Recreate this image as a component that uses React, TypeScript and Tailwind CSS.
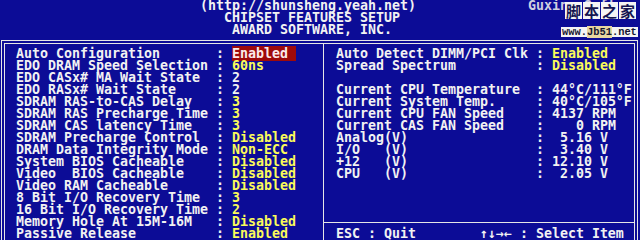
import React from 'react';

type Item = { label: string; value: string; tone: 'sel' | 'yellow' | 'white' };

const chipset: Item[] = [
  { label: 'Auto Configuration', value: 'Enabled', tone: 'sel' },
  { label: 'EDO DRAM Speed Selection', value: '60ns', tone: 'yellow' },
  { label: 'EDO CASx# MA Wait State', value: '2', tone: 'white' },
  { label: 'EDO RASx# Wait State', value: '2', tone: 'white' },
  { label: 'SDRAM RAS-to-CAS Delay', value: '3', tone: 'yellow' },
  { label: 'SDRAM RAS Precharge Time', value: '3', tone: 'yellow' },
  { label: 'SDRAM CAS latency Time', value: '3', tone: 'yellow' },
  { label: 'SDRAM Precharge Control', value: 'Disabled', tone: 'yellow' },
  { label: 'DRAM Data Integrity Mode', value: 'Non-ECC', tone: 'yellow' },
  { label: 'System BIOS Cacheable', value: 'Disabled', tone: 'yellow' },
  { label: 'Video  BIOS Cacheable', value: 'Disabled', tone: 'yellow' },
  { label: 'Video RAM Cacheable', value: 'Disabled', tone: 'yellow' },
  { label: '8 Bit I/O Recovery Time', value: '3', tone: 'yellow' },
  { label: '16 Bit I/O Recovery Time', value: '2', tone: 'yellow' },
  { label: 'Memory Hole At 15M-16M', value: 'Disabled', tone: 'yellow' },
  { label: 'Passive Release', value: 'Enabled', tone: 'yellow' },
];

// null = empty line
const monitor: (Item | null)[] = [
  { label: 'Auto Detect DIMM/PCI Clk', value: 'Enabled', tone: 'yellow' },
  { label: 'Spread Spectrum', value: 'Disabled', tone: 'yellow' },
  null,
  { label: 'Current CPU Temperature', value: '44°C/111°F', tone: 'white' },
  { label: 'Current System Temp.', value: '40°C/105°F', tone: 'white' },
  { label: 'Current CPU FAN Speed', value: '4137 RPM', tone: 'white' },
  { label: 'Current CAS FAN Speed', value: '   0 RPM', tone: 'white' },
  { label: 'Analog(V)', value: ' 5.16 V', tone: 'white' },
  { label: 'I/O   (V)', value: ' 3.40 V', tone: 'white' },
  { label: '+12   (V)', value: '12.10 V', tone: 'white' },
  { label: 'CPU   (V)', value: ' 2.05 V', tone: 'white' },
  null,
  null,
  null,
];

function Row({ item }: { item: Item | null }) {
  if (!item) return <div className="h-[12px]" />;
  return (
    <div className="h-[12px] whitespace-pre">
      <span>{item.label.padEnd(25, ' ')}: </span>
      {item.tone === 'sel' ? (
        <span className="bg-[#9e0a0a] text-[#fbeaea]">{item.value.padEnd(8, ' ')}</span>
      ) : (
        <span className={item.tone === 'yellow' ? 'text-[#fafa5a]' : 'text-[#f2f2f2]'}>{item.value}</span>
      )}
    </div>
  );
}

export default function App() {
  return (
    <div className="relative w-[640px] h-[240px] overflow-hidden bg-[#0c0c96] text-[#f2f2f2] font-['DejaVu_Sans_Mono',monospace] font-bold text-[13.29px] leading-[12px]">
      {/* header */}
      <div className="h-[12px] flex whitespace-pre">
        <span className="ml-[200px]">(http://shunsheng.yeah.net)</span>
        <span className="ml-[112px] text-[#cfcfe0]">Guxing Soft</span>
      </div>
      <div className="h-[12px] pl-[224px] whitespace-pre">CHIPSET FEATURES SETUP</div>
      <div className="h-[12px] pl-[232px] whitespace-pre">AWARD SOFTWARE, INC.</div>

      {/* double frame */}
      <div className="mt-[4px] ml-[1px] w-[637px] h-[220px] border-l border-t border-r border-[#e6e6e6] pl-[2px] pr-[2px] pt-[2px]">
        <div className="flex h-full border-l border-t border-r border-[#e6e6e6]">
          <div className="w-[318px] pt-[4px] pl-[11px]">
            {chipset.map((it) => (
              <Row key={it.label} item={it} />
            ))}
          </div>
          <div className="flex-1 flex flex-col pt-[4px] border-l border-[#e6e6e6]">
            <div className="pl-[12px]">
              {monitor.map((it, i) => (
                <Row key={i} item={it} />
              ))}
            </div>
            <div className="h-[12px] flex items-center">
              <div className="h-px w-full bg-[#e6e6e6]" />
            </div>
            <div className="h-[12px] pl-[12px] whitespace-pre">
              {'ESC : Quit'.padEnd(18, ' ')}↑↓→← : Select Item
            </div>
          </div>
        </div>
      </div>

      {/* site watermark */}
      <div className="absolute left-[565px] top-[2px] flex gap-[1px] font-['Noto_Sans_CJK_SC',sans-serif] font-bold text-[15px] leading-[17px] text-[#141450]">
        <span className="bg-[#f4f4f4] px-[1px]">脚</span>
        <span className="bg-[#f4f4f4] px-[1px]">本</span>
        <span className="bg-[#f4f4f4] px-[1px]">之</span>
        <span className="bg-[#f4f4f4] px-[1px]">家</span>
      </div>
      <div className="absolute left-[561px] top-[27px] h-[10px] bg-[#f4f4f4] px-[1px] font-['Liberation_Mono',monospace] font-bold text-[10.4px] leading-[10px] text-[#141430] whitespace-pre">
        www.<span className="bg-[#e8d6a0]">Jb51</span>.net
      </div>
    </div>
  );
}
